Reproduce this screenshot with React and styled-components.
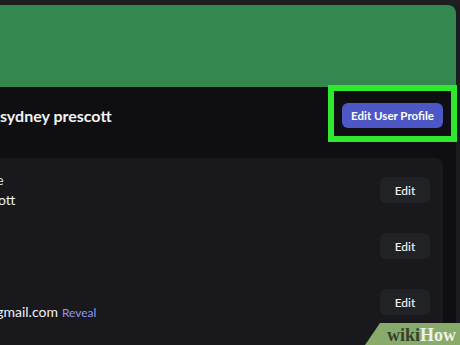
import React from "react";
import styled, { createGlobalStyle } from "styled-components";

const Global = createGlobalStyle`
  html, body {
    margin: 0;
    padding: 0;
    background: #1e1f22;
    overflow: hidden;
  }
  body {
    font-family: Lato, "Noto Sans", sans-serif;
    color: #f2f3f5;
  }
  * { box-sizing: border-box; }
`;

const Screen = styled.div`
  display: flex;
  width: 460px;
  height: 345px;
  padding-top: 5px;
  overflow: hidden;
`;

const Panel = styled.div`
  flex: 1;
  margin-left: -160px;
  display: flex;
  flex-direction: column;
  background: #0f0f12;
  border-top-right-radius: 8px;
`;

const ScrollStrip = styled.div`
  width: 4px;
  background: #1b1c20;
`;

const Banner = styled.div`
  height: 82px;
  flex: none;
  background: #33874f;
  border-top-right-radius: 8px;
`;

const Header = styled.div`
  display: flex;
  align-items: center;
  justify-content: space-between;
  padding: 16px 13px 30px 160px;
`;

const Name = styled.div`
  font-size: 16px;
  font-weight: 700;
  line-height: 20px;
  color: #f2f3f5;
`;

const ButtonWrap = styled.div`
  position: relative;
  display: flex;
`;

const PrimaryButton = styled.button`
  height: 25px;
  width: 101px;
  border: none;
  border-radius: 6px;
  background: #4e57c6;
  color: #ffffff;
  font-family: Lato, "Noto Sans", sans-serif;
  font-size: 11.5px;
  font-weight: 700;
  padding: 0;
`;

const Highlight = styled.div`
  position: absolute;
  top: -18px;
  left: -14px;
  right: -14px;
  bottom: -14px;
  border: 6px solid #2fe92f;
  pointer-events: none;
`;

const Card = styled.div`
  flex: 1;
  margin-right: 13px;
  background: #18181d;
  border-top-right-radius: 8px;
  padding: 12px 13px 0 79px;
  display: flex;
  flex-direction: column;
  gap: 16px;
`;

const Row = styled.div`
  display: flex;
  align-items: center;
  justify-content: space-between;
  height: 40px;
`;

const Field = styled.div`
  display: flex;
  flex-direction: column;
`;

const Label = styled.div`
  font-size: 14px;
  line-height: 20px;
  color: #dcdde1;
`;

const Value = styled.div`
  font-size: 14px;
  line-height: 20px;
  color: #f0f1f4;
  white-space: nowrap;
`;

const RevealLink = styled.span`
  font-size: 12px;
  color: #8e97f0;
  margin-left: 4px;
`;

const EditButton = styled.button`
  width: 50px;
  height: 26px;
  border: none;
  border-radius: 6px;
  background: #212226;
  color: #f2f3f5;
  font-family: Lato, "Noto Sans", sans-serif;
  font-size: 12px;
  font-weight: 500;
  padding: 0;
`;

const Watermark = styled.div`
  position: fixed;
  right: 0;
  bottom: 0;
  width: 95px;
  height: 22px;
  background: #88aa6a;
  clip-path: polygon(15px 0, 100% 0, 100% 100%, 0 100%);
  padding-left: 22px;
  font-family: "Liberation Serif", serif;
  font-weight: 700;
  font-size: 18px;
  line-height: 24px;
  white-space: nowrap;
`;

const Wiki = styled.span`
  color: #34402c;
`;

const How = styled.span`
  color: #eef2e8;
`;

const rows = [
  { label: "Display Name", value: "sydney prescott" },
  { label: "Username", value: "sydney" },
  { label: "Email", value: "***********@gmail.com", reveal: true },
];

export default function App() {
  return (
    <>
      <Global />
      <Screen>
        <Panel>
          <Banner />
          <Header>
            <Name>sydney prescott</Name>
            <ButtonWrap>
              <PrimaryButton>Edit User Profile</PrimaryButton>
              <Highlight />
            </ButtonWrap>
          </Header>
          <Card>
            {rows.map((r) => (
              <Row key={r.label}>
                <Field>
                  <Label>{r.label}</Label>
                  <Value>
                    {r.value}
                    {r.reveal && <RevealLink>Reveal</RevealLink>}
                  </Value>
                </Field>
                <EditButton>Edit</EditButton>
              </Row>
            ))}
          </Card>
        </Panel>
        <ScrollStrip />
      </Screen>
      <Watermark>
        <Wiki>wiki</Wiki>
        <How>How</How>
      </Watermark>
    </>
  );
}
